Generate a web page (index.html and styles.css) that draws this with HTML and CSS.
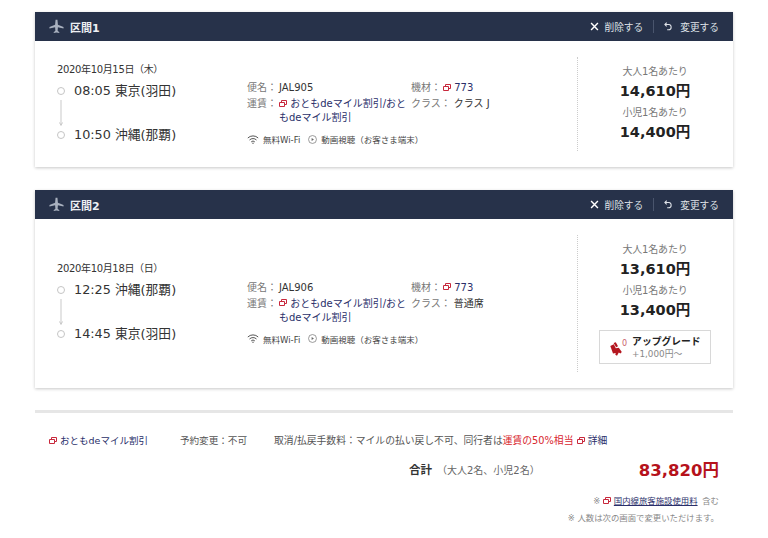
FILE: index.html
```html
<!DOCTYPE html>
<html lang="ja">
<head>
<meta charset="utf-8">
<title>区間</title>
<link rel="stylesheet" href="styles.css">
</head>
<body>
<svg class="defs" width="0" height="0" aria-hidden="true">
  <symbol id="ext" viewBox="0 0 8 8"><path d="M2.500 2.500V.5h5v4H5.500M.5 2.500h5v4h-5z" fill="none" stroke="#c8283c" stroke-width="1"/></symbol>
  <symbol id="plane" viewBox="0 0 16 16"><path d="M7 .8h2l.5 5.200 6 2.600v1.500L9.500 8.700 9.200 12.600 11 14v1L8 14.300 5 15v-1l1.800-1.400L6.500 8.700.5 10.100V8.600l6-2.600z" fill="#a9b1bf"/></symbol>
  <symbol id="close" viewBox="0 0 10 10"><path d="M1.200 1.200l7.600 7.600M8.800 1.200L1.200 8.800" stroke="#fff" stroke-width="1.600" fill="none"/></symbol>
  <symbol id="undo" viewBox="0 0 10 10"><path d="M3 .8L1 2.800 3 4.800M1.300 2.800h4.200c3.200 0 3.400 5.800-.3 5.800H3.500" stroke="#dfe2e8" stroke-width="1.200" fill="none"/></symbol>
  <symbol id="wifi" viewBox="0 0 12 9"><path d="M.8 3a7.500 7.500 0 0 1 10.400 0M2.500 5a5 5 0 0 1 7 0M4.200 6.900a2.500 2.500 0 0 1 3.600 0" stroke="#555" fill="none"/><circle cx="6" cy="8.200" r=".7" fill="#555"/></symbol>
  <symbol id="play" viewBox="0 0 10 10"><circle cx="5" cy="5" r="4.400" fill="none" stroke="#777" stroke-width=".8"/><path d="M4 3.300L6.600 5 4 6.700z" fill="#666"/></symbol>
  <symbol id="seat" viewBox="0 0 12 14"><path d="M.3 4L3.800 2.300l2 4 3-.6 3 4.300-1.400 1.400-1.600-.8L7 13.700 5.300 12.700l.4-1.700-2.700.5zM3.600.9L5.800.2l2.200 4-1.900 1z" fill="#b4161f"/></symbol>
</svg>

<main class="page">
  <section class="card">
    <header class="card-head">
      <div class="head-title"><svg class="ico-plane"><use href="#plane"/></svg><span>区間1</span></div>
      <div class="head-actions">
        <span class="action"><svg class="ico-act"><use href="#close"/></svg>削除する</span>
        <i class="action-sep"></i>
        <span class="action"><svg class="ico-act ico-undo"><use href="#undo"/></svg>変更する</span>
      </div>
    </header>
    <div class="card-body">
      <div class="route">
        <div class="date">2020年10月15日（木）</div>
        <div class="stop"><i class="dot"></i>08:05 東京(羽田)</div>
        <svg class="connector" viewBox="0 0 6 26"><path d="M3 0v25M1.500 22.500L3 25.500l1.500-3" stroke="#c9c9c9" fill="none"/></svg>
        <div class="stop"><i class="dot"></i>10:50 沖縄(那覇)</div>
      </div>
      <div class="details">
        <div class="facts">
          <div class="fact"><span class="k">便名：</span><span class="v">JAL905</span></div>
          <div class="fact"><span class="k">機材：</span><span class="link"><svg class="ico-ext"><use href="#ext"/></svg> 773</span></div>
          <div class="fact"><span class="k">運賃：</span><span class="link"><svg class="ico-ext"><use href="#ext"/></svg> おともdeマイル割引/おともdeマイル割引</span></div>
          <div class="fact"><span class="k k-wide">クラス：</span><span class="v">クラス J</span></div>
        </div>
        <div class="amenities"><svg class="ico-wifi"><use href="#wifi"/></svg><span>無料Wi-Fi</span><svg class="ico-play"><use href="#play"/></svg><span>動画視聴（お客さま端末）</span></div>
      </div>
      <div class="prices">
        <div class="p-label">大人1名あたり</div>
        <div class="p-value">14,610円</div>
        <div class="p-label">小児1名あたり</div>
        <div class="p-value">14,400円</div>
      </div>
    </div>
  </section>

  <section class="card">
    <header class="card-head">
      <div class="head-title"><svg class="ico-plane"><use href="#plane"/></svg><span>区間2</span></div>
      <div class="head-actions">
        <span class="action"><svg class="ico-act"><use href="#close"/></svg>削除する</span>
        <i class="action-sep"></i>
        <span class="action"><svg class="ico-act ico-undo"><use href="#undo"/></svg>変更する</span>
      </div>
    </header>
    <div class="card-body">
      <div class="route">
        <div class="date">2020年10月18日（日）</div>
        <div class="stop"><i class="dot"></i>12:25 沖縄(那覇)</div>
        <svg class="connector" viewBox="0 0 6 26"><path d="M3 0v25M1.500 22.500L3 25.500l1.500-3" stroke="#c9c9c9" fill="none"/></svg>
        <div class="stop"><i class="dot"></i>14:45 東京(羽田)</div>
      </div>
      <div class="details">
        <div class="facts">
          <div class="fact"><span class="k">便名：</span><span class="v">JAL906</span></div>
          <div class="fact"><span class="k">機材：</span><span class="link"><svg class="ico-ext"><use href="#ext"/></svg> 773</span></div>
          <div class="fact"><span class="k">運賃：</span><span class="link"><svg class="ico-ext"><use href="#ext"/></svg> おともdeマイル割引/おともdeマイル割引</span></div>
          <div class="fact"><span class="k k-wide">クラス：</span><span class="v">普通席</span></div>
        </div>
        <div class="amenities"><svg class="ico-wifi"><use href="#wifi"/></svg><span>無料Wi-Fi</span><svg class="ico-play"><use href="#play"/></svg><span>動画視聴（お客さま端末）</span></div>
      </div>
      <div class="prices">
        <div class="p-label">大人1名あたり</div>
        <div class="p-value">13,610円</div>
        <div class="p-label">小児1名あたり</div>
        <div class="p-value">13,400円</div>
        <div class="upgrade">
          <svg class="ico-seat"><use href="#seat"/></svg><span class="up-zero">0</span>
          <div class="up-text"><div class="up-title">アップグレード</div><div class="up-price">+1,000円～</div></div>
        </div>
      </div>
    </div>
  </section>

  <footer class="summary">
    <div class="rules">
      <span class="link rule-fare"><svg class="ico-ext"><use href="#ext"/></svg> おともdeマイル割引</span>
      <span class="rule-change">予約変更：不可</span>
      <span class="rule-fee">取消/払戻手数料：マイルの払い戻し不可、同行者は<em class="warn">運賃の50%相当</em> <span class="link"><svg class="ico-ext"><use href="#ext"/></svg> 詳細</span></span>
    </div>
    <div class="total">
      <span class="total-label">合計</span>
      <span class="total-pax">（大人2名、小児2名）</span>
      <span class="total-value">83,820円</span>
    </div>
    <div class="note">※<svg class="ico-ext"><use href="#ext"/></svg> <a class="fee">国内線旅客施設使用料</a> <span class="note-tail">含む</span></div>
    <div class="note">※ 人数は次の画面で変更いただけます。</div>
  </footer>
</main>
</body>
</html>
```
FILE: styles.css
```css
* { box-sizing: border-box; }
html, body { margin: 0; padding: 0; background: #fff; }
body {
  font-family: "DejaVu Sans", "Noto Sans CJK JP", sans-serif;
  font-size: 10px;
  color: #333;
}
.defs { display: block; height: 0; }
.page { padding: 12px 35px 0; }

.card {
  background: #fff;
  box-shadow: 0 1px 3px rgba(0, 0, 0, .22);
  margin-bottom: 23px;
}
.card-head {
  height: 29px;
  background: #27324a;
  color: #fff;
  display: flex;
  align-items: center;
  justify-content: space-between;
  padding: 0 14px;
}
.head-title { display: flex; align-items: center; font-size: 11px; font-weight: 700; color: #eef0f4; }
.ico-plane { width: 15px; height: 15px; margin-right: 6px; }
.head-actions { display: flex; align-items: center; font-size: 9.700px; color: #dfe2e8; }
.action { display: flex; align-items: center; }
.ico-act { width: 9px; height: 9px; margin-right: 6px; }
.ico-undo { margin-right: 7px; }
.action-sep { width: 1px; height: 13px; background: #4a556d; margin: 0 10px; }

.card-body {
  display: flex;
  align-items: stretch;
  padding: 16px 0;
}
.route { width: 190px; margin: 0 0 2px 22px; align-self: center; }
.date { font-size: 10px; line-height: 14px; margin-bottom: 5px; letter-spacing: -.35px; }
.stop {
  display: flex;
  align-items: center;
  font-size: 12.800px;
  line-height: 18px;
  color: #333;
}
.dot {
  width: 8px;
  height: 8px;
  border: 1.500px solid #c5c5c5;
  border-radius: 50%;
  margin-right: 9px;
}
.connector { display: block; width: 6px; height: 26px; margin-left: 1px; }

.details { width: 330px; align-self: center; margin-top: 18px; padding-right: 8px; }
.facts { display: grid; grid-template-columns: 164px 1fr; row-gap: 2px; align-items: start; }
.fact { display: flex; font-size: 10px; line-height: 14px; padding-right: 3px; }
.k { color: #777; flex: none; min-width: 32px; }
.k-wide { margin-right: 3px; }
.v { color: #333; }
.link { color: #2a2f6a; }
.ico-ext { width: 8px; height: 8px; vertical-align: -.5px; }
.amenities { display: flex; align-items: center; margin-top: 8px; font-size: 8.500px; color: #444; }
.ico-wifi { width: 12px; height: 9px; margin-right: 4px; }
.ico-play { width: 9px; height: 9px; margin: 0 4px 0 8px; }

.prices {
  flex: 1;
  border-left: 1px dotted #ccc;
  display: flex;
  flex-direction: column;
  align-items: center;
  padding: 8px 1px 7px 0;
}
.p-label { font-size: 10px; line-height: 14px; color: #777; letter-spacing: -.2px; }
.p-value { font-size: 14.500px; font-weight: 700; line-height: 24px; color: #222; }
.p-value + .p-label { margin-top: 3px; }
.upgrade {
  width: 112px;
  height: 34px;
  margin: 8px 0 1px;
  border: 1px solid #d8d8d8;
  display: flex;
  align-items: center;
  padding-left: 10px;
}
.ico-seat { width: 12px; height: 14px; margin-top: 3px; }
.up-zero { font-size: 8px; color: #c9626a; margin: -8px 5px 0 0; }
.up-title { font-size: 9.800px; font-weight: 700; line-height: 13px; color: #222; }
.up-price { font-size: 8.800px; line-height: 12px; color: #888; }

.summary { border-top: 3px solid #e6e6e6; margin-top: -1px; }
.rules {
  display: flex;
  padding: 21px 0 0 14px;
  font-size: 9.800px;
  line-height: 14px;
  color: #555;
}
.rule-fare { font-size: 9.500px; margin-right: 32px; }
.rule-change { font-size: 9.600px; margin-right: 27px; }
.warn { color: #d8262e; font-style: normal; }
.total {
  display: flex;
  align-items: center;
  height: 30px;
  margin: 6px 0 9px;
  padding: 0 14px 0 374px;
}
.total-label { font-size: 11.500px; font-weight: 700; color: #333; }
.total-pax { font-size: 10px; color: #666; margin-left: 5px; }
.total-value { margin-left: auto; font-size: 16.500px; font-weight: 700; color: #b5121b; }
.note {
  text-align: right;
  padding-right: 14px;
  font-size: 8.400px;
  line-height: 17px;
  color: #888;
}
.note .ico-ext { margin-left: 3px; }
.note-tail { margin-left: 2px; }
.fee { color: #2a2f6a; text-decoration: underline; }
```
